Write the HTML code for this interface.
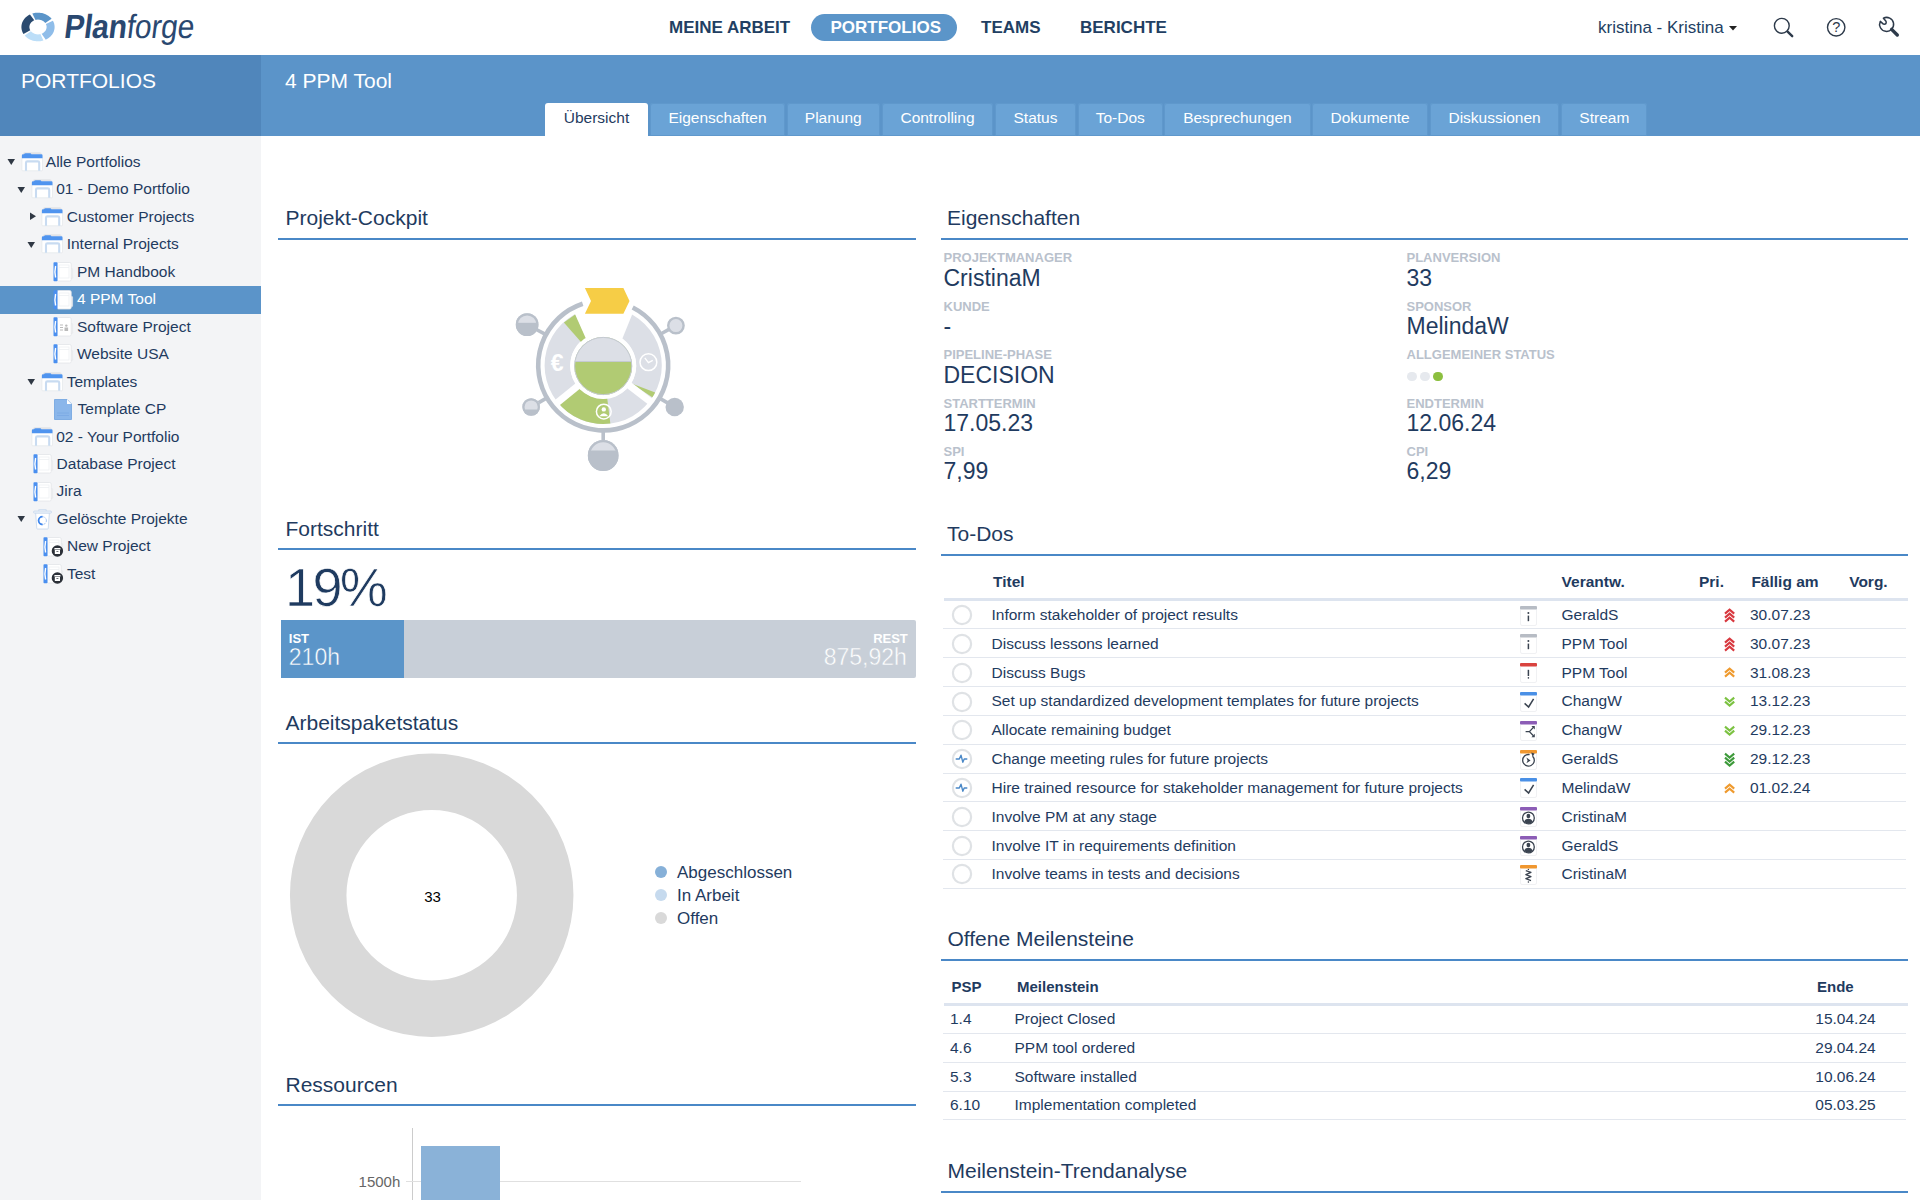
<!DOCTYPE html>
<html><head><meta charset="utf-8">
<style>
*{box-sizing:border-box;margin:0;padding:0}
html,body{width:1920px;height:1200px;overflow:hidden;background:#fff;font-family:"Liberation Sans",sans-serif;color:#1f3b60}
.a{position:absolute}
.t{position:absolute;white-space:nowrap;line-height:1}
#top{position:absolute;left:0;top:0;width:1920px;height:55px;background:#fff}
.nav{position:absolute;top:18.5px;font-weight:bold;font-size:17px;line-height:1;color:#223f63}
#side{position:absolute;left:0;top:55px;width:261px;height:1145px;background:#f3f4f6}
#sidehead{position:absolute;left:0;top:55px;width:261px;height:81px;background:#5086bb}
#mainhead{position:absolute;left:261px;top:55px;width:1659px;height:81px;background:#5b94c9}
.tab{position:absolute;top:103px;height:33px;background:#6aa3d6;border-radius:3px 3px 0 0;color:#fff;font-size:15.5px;line-height:1;box-shadow:inset 0 0 0 1px #5f98cc}
.tab span{position:absolute;top:7px;left:0;right:0;text-align:center}
.tab.on{background:#fff;color:#1f3b60;box-shadow:none}
.h2{position:absolute;font-size:21px;line-height:1;white-space:nowrap;color:#1f3b60}
.hl{position:absolute;height:2px;background:#4a88c7}
.row{position:absolute;left:0;width:261px;height:27.5px}
.tree{position:absolute;font-size:15.5px;line-height:1;white-space:nowrap;color:#1f3b60}
.lbl{position:absolute;font-size:13px;font-weight:bold;line-height:1;color:#b9c1cc;white-space:nowrap}
.val{position:absolute;font-size:23px;line-height:1;color:#1f3b60;white-space:nowrap}
.th{position:absolute;font-size:15.5px;font-weight:bold;line-height:1;color:#1f3b60;white-space:nowrap}
.td{position:absolute;font-size:15.5px;line-height:1;color:#1f3b60;white-space:nowrap}
.sep{position:absolute;height:1px;background:#e6e9ef}
</style></head><body>

<!-- TOP BAR -->
<div id="top"></div>
<div id="side"></div>
<div id="sidehead"></div>
<div id="mainhead"></div>
<svg class="a" style="left:18px;top:9px" width="40" height="36" viewBox="0 0 40 36"><path d="M5.48,24.93 L4.89,23.93 L4.40,22.89 L4.00,21.82 L3.70,20.73 L3.51,19.62 L3.41,18.50 L3.42,17.38 L3.52,16.26 L3.73,15.15 L4.04,14.06 L4.45,12.99 L4.96,11.96 L5.55,10.96 L6.24,10.00 L7.01,9.10 L7.86,8.25 L8.79,7.46 L9.78,6.73 L10.84,6.08 L11.95,5.49 L16.23,11.35 L15.64,11.62 L15.07,11.94 L14.53,12.29 L14.03,12.68 L13.56,13.10 L13.13,13.55 L12.75,14.02 L12.41,14.53 L12.11,15.05 L11.87,15.59 L11.67,16.15 L11.53,16.72 L11.44,17.29 L11.40,17.87 L11.42,18.45 L11.48,19.03 L11.60,19.60 L11.78,20.16 L12.00,20.71 L12.27,21.24Z" fill="#2a4a6f"/><path d="M14.32,4.56 L15.35,4.27 L16.41,4.04 L17.47,3.87 L18.55,3.75 L19.64,3.70 L20.72,3.71 L21.81,3.78 L22.88,3.92 L23.95,4.11 L24.99,4.36 L26.02,4.67 L27.02,5.04 L27.98,5.46 L28.92,5.94 L29.82,6.47 L30.67,7.05 L31.48,7.67 L32.24,8.34 L32.95,9.05 L33.60,9.80 L27.29,14.08 L26.98,13.68 L26.64,13.29 L26.26,12.93 L25.87,12.59 L25.44,12.27 L24.99,11.98 L24.53,11.71 L24.04,11.47 L23.53,11.25 L23.01,11.07 L22.48,10.91 L21.93,10.79 L21.38,10.70 L20.82,10.63 L20.26,10.60 L19.70,10.60 L19.14,10.64 L18.58,10.70 L18.03,10.80 L17.49,10.92Z" fill="#5b95c9"/><path d="M34.92,11.73 L35.43,12.74 L35.86,13.77 L36.19,14.83 L36.42,15.91 L36.56,17.00 L36.60,18.10 L36.54,19.20 L36.39,20.29 L36.13,21.36 L35.79,22.42 L35.35,23.45 L34.82,24.45 L34.20,25.41 L33.50,26.32 L32.72,27.19 L31.86,28.01 L30.93,28.76 L29.94,29.45 L28.89,30.07 L27.79,30.63 L23.63,24.71 L24.22,24.45 L24.78,24.15 L25.32,23.82 L25.82,23.45 L26.29,23.05 L26.72,22.62 L27.11,22.16 L27.46,21.68 L27.77,21.17 L28.03,20.65 L28.24,20.11 L28.41,19.56 L28.52,19.00 L28.58,18.44 L28.60,17.87 L28.56,17.30 L28.47,16.74 L28.34,16.18 L28.15,15.64 L27.92,15.11Z" fill="#8fbde9"/><path d="M25.40,31.52 L24.41,31.79 L23.39,32.00 L22.37,32.15 L21.33,32.25 L20.29,32.30 L19.25,32.29 L18.21,32.22 L17.17,32.09 L16.15,31.91 L15.15,31.68 L14.16,31.39 L13.20,31.04 L12.26,30.65 L11.35,30.21 L10.48,29.71 L9.64,29.18 L8.85,28.59 L8.10,27.97 L7.40,27.31 L6.74,26.61 L12.87,22.14 L13.19,22.52 L13.53,22.87 L13.90,23.21 L14.29,23.53 L14.71,23.83 L15.14,24.11 L15.60,24.36 L16.07,24.58 L16.56,24.78 L17.06,24.95 L17.57,25.10 L18.09,25.22 L18.63,25.30 L19.16,25.36 L19.70,25.40 L20.24,25.40 L20.78,25.37 L21.32,25.31 L21.85,25.23 L22.37,25.11Z" fill="#bcdef8"/></svg>
<div class="t" style="left:63px;top:13.1px;font-size:30px;color:#2a4870;letter-spacing:-0.2px;transform:scaleY(1.12) skewX(-8deg);transform-origin:0 25.9px"><b>Plan</b>forge</div>
<div class="t" style="top:18.55px;font-size:17px;left:669.00px;color:#223f63;font-weight:bold;">MEINE ARBEIT</div>
<div class="a" style="left:811.00px;top:14.00px;width:146.00px;height:26.50px;background:#5b95c9;border-radius:14px"></div>
<div class="t" style="top:18.55px;font-size:17px;left:830.50px;color:#fff;font-weight:bold;">PORTFOLIOS</div>
<div class="t" style="top:18.55px;font-size:17px;left:981.00px;color:#223f63;font-weight:bold;">TEAMS</div>
<div class="t" style="top:18.55px;font-size:17px;left:1080.00px;color:#223f63;font-weight:bold;">BERICHTE</div>
<div class="t" style="top:18.95px;font-size:17px;left:1598.00px;color:#223f63;">kristina - Kristina</div>
<svg class="a" style="left:1728px;top:24px" width="10" height="8"><path d="M1,2 L9,2 L5,6.5Z" fill="#222"/></svg>
<svg class="a" style="left:1770px;top:14px" width="28" height="28" viewBox="0 0 28 28">
<circle cx="11.8" cy="11.8" r="7.4" fill="none" stroke="#2d3a4a" stroke-width="1.4"/>
<path d="M17.6,17.6 L22.2,22.2" stroke="#2d3a4a" stroke-width="2.4" stroke-linecap="round"/></svg>
<svg class="a" style="left:1822px;top:13px" width="28" height="28" viewBox="0 0 28 28">
<circle cx="14.2" cy="14.3" r="8.7" fill="none" stroke="#2d3a4a" stroke-width="1.4"/>
<text x="14.2" y="19.2" text-anchor="middle" font-family="Liberation Sans" font-size="14.5" fill="#2d3a4a">?</text></svg>
<svg class="a" style="left:1875px;top:13px" width="28" height="28" viewBox="0 0 28 28">
<path d="M5.3,8.4 A7,7 0 1 0 8.4,5.2 L11,8.2 Q12,11.6 8.4,11.1 Z" fill="none" stroke="#2d3a4a" stroke-width="1.5" stroke-linejoin="round"/>
<path d="M16.6,16.4 L22.3,22" stroke="#2d3a4a" stroke-width="3.4" stroke-linecap="round"/></svg>
<div class="t" style="top:70.15px;font-size:21px;left:21.00px;color:#fff;">PORTFOLIOS</div>
<div class="t" style="top:70.15px;font-size:21px;left:285.00px;color:#fff;">4 PPM Tool</div>
<div class="tab on" style="left:545px;width:103.0px"><span>Übersicht</span></div>
<div class="tab" style="left:650px;width:135.0px"><span>Eigenschaften</span></div>
<div class="tab" style="left:786.5px;width:93.5px"><span>Planung</span></div>
<div class="tab" style="left:882px;width:111.0px"><span>Controlling</span></div>
<div class="tab" style="left:995px;width:81.0px"><span>Status</span></div>
<div class="tab" style="left:1078px;width:84.5px"><span>To-Dos</span></div>
<div class="tab" style="left:1164.3px;width:146.3px"><span>Besprechungen</span></div>
<div class="tab" style="left:1312.4px;width:115.4px"><span>Dokumente</span></div>
<div class="tab" style="left:1429.6px;width:129.9px"><span>Diskussionen</span></div>
<div class="tab" style="left:1561.3px;width:86.1px"><span>Stream</span></div>
<div class="a" style="left:0.00px;top:286.00px;width:261.00px;height:27.50px;background:#5b94c9;"></div>
<svg class="a" style="left:6.5px;top:158.2px" width="9" height="8"><path d="M0.5,1 L8,1 L4.25,7 Z" fill="#2f3844"/></svg>
<svg class="a" style="left:20.5px;top:152.0px" width="22" height="21" viewBox="0 0 22 21">
<path d="M1.8,2.6 Q1.8,0.3 3.8,0.3 L18.6,0.3 Q20.6,0.3 20.6,2.6 Z" fill="#e2e4e7"/>
<rect x="0.9" y="2.3" width="20.6" height="16.5" rx="1" fill="#fff" stroke="#e4e7ea" stroke-width="0.7"/>
<path d="M0.9,6.3 L0.9,3.4 Q0.9,2.3 2,2.3 L3,2.3 Q3.4,1.2 4.6,1.2 L9.2,1.2 Q10,1.2 10.4,2.3 L20.4,2.3 Q21.5,2.3 21.5,3.4 L21.5,6.3 Z" fill="#4f94ef"/>
<path d="M5,18.8 L5,10.8 Q5,9.4 6.4,9.4 L16.8,9.4 Q18.2,9.4 18.2,10.8 L18.2,18.8" fill="none" stroke="#c8dbf1" stroke-width="2.1"/>
</svg>
<div class="t" style="top:153.82px;font-size:15.5px;left:45.80px;color:#1f3b60;">Alle Portfolios</div>
<svg class="a" style="left:16.95px;top:185.67px" width="9" height="8"><path d="M0.5,1 L8,1 L4.25,7 Z" fill="#2f3844"/></svg>
<svg class="a" style="left:30.95px;top:179.47px" width="22" height="21" viewBox="0 0 22 21">
<path d="M1.8,2.6 Q1.8,0.3 3.8,0.3 L18.6,0.3 Q20.6,0.3 20.6,2.6 Z" fill="#e2e4e7"/>
<rect x="0.9" y="2.3" width="20.6" height="16.5" rx="1" fill="#fff" stroke="#e4e7ea" stroke-width="0.7"/>
<path d="M0.9,6.3 L0.9,3.4 Q0.9,2.3 2,2.3 L3,2.3 Q3.4,1.2 4.6,1.2 L9.2,1.2 Q10,1.2 10.4,2.3 L20.4,2.3 Q21.5,2.3 21.5,3.4 L21.5,6.3 Z" fill="#4f94ef"/>
<path d="M5,18.8 L5,10.8 Q5,9.4 6.4,9.4 L16.8,9.4 Q18.2,9.4 18.2,10.8 L18.2,18.8" fill="none" stroke="#c8dbf1" stroke-width="2.1"/>
</svg>
<div class="t" style="top:181.29px;font-size:15.5px;left:56.25px;color:#1f3b60;">01 - Demo Portfolio</div>
<svg class="a" style="left:28.5px;top:212.44px" width="8" height="9"><path d="M1,0.5 L7,4.25 L1,8 Z" fill="#2f3844"/></svg>
<svg class="a" style="left:41.4px;top:206.94px" width="22" height="21" viewBox="0 0 22 21">
<path d="M1.8,2.6 Q1.8,0.3 3.8,0.3 L18.6,0.3 Q20.6,0.3 20.6,2.6 Z" fill="#e2e4e7"/>
<rect x="0.9" y="2.3" width="20.6" height="16.5" rx="1" fill="#fff" stroke="#e4e7ea" stroke-width="0.7"/>
<path d="M0.9,6.3 L0.9,3.4 Q0.9,2.3 2,2.3 L3,2.3 Q3.4,1.2 4.6,1.2 L9.2,1.2 Q10,1.2 10.4,2.3 L20.4,2.3 Q21.5,2.3 21.5,3.4 L21.5,6.3 Z" fill="#4f94ef"/>
<path d="M5,18.8 L5,10.8 Q5,9.4 6.4,9.4 L16.8,9.4 Q18.2,9.4 18.2,10.8 L18.2,18.8" fill="none" stroke="#c8dbf1" stroke-width="2.1"/>
</svg>
<div class="t" style="top:208.76px;font-size:15.5px;left:66.70px;color:#1f3b60;">Customer Projects</div>
<svg class="a" style="left:27.4px;top:240.60999999999999px" width="9" height="8"><path d="M0.5,1 L8,1 L4.25,7 Z" fill="#2f3844"/></svg>
<svg class="a" style="left:41.4px;top:234.41px" width="22" height="21" viewBox="0 0 22 21">
<path d="M1.8,2.6 Q1.8,0.3 3.8,0.3 L18.6,0.3 Q20.6,0.3 20.6,2.6 Z" fill="#e2e4e7"/>
<rect x="0.9" y="2.3" width="20.6" height="16.5" rx="1" fill="#fff" stroke="#e4e7ea" stroke-width="0.7"/>
<path d="M0.9,6.3 L0.9,3.4 Q0.9,2.3 2,2.3 L3,2.3 Q3.4,1.2 4.6,1.2 L9.2,1.2 Q10,1.2 10.4,2.3 L20.4,2.3 Q21.5,2.3 21.5,3.4 L21.5,6.3 Z" fill="#4f94ef"/>
<path d="M5,18.8 L5,10.8 Q5,9.4 6.4,9.4 L16.8,9.4 Q18.2,9.4 18.2,10.8 L18.2,18.8" fill="none" stroke="#c8dbf1" stroke-width="2.1"/>
</svg>
<div class="t" style="top:236.23px;font-size:15.5px;left:66.70px;color:#1f3b60;">Internal Projects</div>
<svg class="a" style="left:53.0px;top:262.08px" width="21" height="22" viewBox="0 0 21 22">
<rect x="17.6" y="6.5" width="2" height="10" rx="0.6" fill="#f4f4f4" stroke="#e2e4e8" stroke-width="0.6"/>
<rect x="4" y="0.5" width="14.2" height="18.5" rx="1.5" fill="#fff" stroke="#e2e5e9" stroke-width="0.8"/>
<rect x="0.5" y="0.3" width="4" height="19" rx="0.8" fill="#4a8ff0"/>
<path d="M2.6,4 Q1.3,9.6 2.6,15.5" stroke="#fff" stroke-width="1.4" fill="none"/>
<rect x="6" y="3" width="10" height="13" fill="none" stroke="#eef0f2" stroke-width="0.8"/><path d="M6,5.5 L16,5.5" stroke="#eef0f2" stroke-width="0.8"/></svg>
<div class="t" style="top:263.70px;font-size:15.5px;left:77.00px;color:#1f3b60;">PM Handbook</div>
<svg class="a" style="left:53.0px;top:289.55px" width="21" height="22" viewBox="0 0 21 22">
<rect x="17.6" y="6.5" width="2" height="10" rx="0.6" fill="#f4f4f4" stroke="#e2e4e8" stroke-width="0.6"/>
<rect x="4" y="0.5" width="14.2" height="18.5" rx="1.5" fill="#fff" stroke="#e2e5e9" stroke-width="0.8"/>
<rect x="0.5" y="0.3" width="4" height="19" rx="0.8" fill="#4a8ff0"/>
<path d="M2.6,4 Q1.3,9.6 2.6,15.5" stroke="#fff" stroke-width="1.4" fill="none"/>
<rect x="6" y="3" width="10" height="13" fill="none" stroke="#eef0f2" stroke-width="0.8"/><path d="M6,5.5 L16,5.5" stroke="#eef0f2" stroke-width="0.8"/></svg>
<div class="t" style="top:291.18px;font-size:15.5px;left:77.00px;color:#fff;">4 PPM Tool</div>
<svg class="a" style="left:53.0px;top:317.02px" width="21" height="22" viewBox="0 0 21 22">
<rect x="17.6" y="6.5" width="2" height="10" rx="0.6" fill="#f4f4f4" stroke="#e2e4e8" stroke-width="0.6"/>
<rect x="4" y="0.5" width="14.2" height="18.5" rx="1.5" fill="#fff" stroke="#e2e5e9" stroke-width="0.8"/>
<rect x="0.5" y="0.3" width="4" height="19" rx="0.8" fill="#4a8ff0"/>
<path d="M2.6,4 Q1.3,9.6 2.6,15.5" stroke="#fff" stroke-width="1.4" fill="none"/>
<path d="M7,8 L10,8 M7,10.5 L10,10.5 M7,13 L10,13" stroke="#bbb" stroke-width="1"/><circle cx="13.3" cy="8.6" r="1.2" fill="#bbb"/><rect x="11.5" y="10.5" width="3.6" height="3.5" fill="#bbb"/></svg>
<div class="t" style="top:318.64px;font-size:15.5px;left:77.00px;color:#1f3b60;">Software Project</div>
<svg class="a" style="left:53.0px;top:344.48999999999995px" width="21" height="22" viewBox="0 0 21 22">
<rect x="17.6" y="6.5" width="2" height="10" rx="0.6" fill="#f4f4f4" stroke="#e2e4e8" stroke-width="0.6"/>
<rect x="4" y="0.5" width="14.2" height="18.5" rx="1.5" fill="#fff" stroke="#e2e5e9" stroke-width="0.8"/>
<rect x="0.5" y="0.3" width="4" height="19" rx="0.8" fill="#4a8ff0"/>
<path d="M2.6,4 Q1.3,9.6 2.6,15.5" stroke="#fff" stroke-width="1.4" fill="none"/>
<rect x="6" y="3" width="10" height="13" fill="none" stroke="#eef0f2" stroke-width="0.8"/><path d="M6,5.5 L16,5.5" stroke="#eef0f2" stroke-width="0.8"/></svg>
<div class="t" style="top:346.11px;font-size:15.5px;left:77.00px;color:#1f3b60;">Website USA</div>
<svg class="a" style="left:27.4px;top:377.96px" width="9" height="8"><path d="M0.5,1 L8,1 L4.25,7 Z" fill="#2f3844"/></svg>
<svg class="a" style="left:41.4px;top:371.76px" width="22" height="21" viewBox="0 0 22 21">
<path d="M1.8,2.6 Q1.8,0.3 3.8,0.3 L18.6,0.3 Q20.6,0.3 20.6,2.6 Z" fill="#e2e4e7"/>
<rect x="0.9" y="2.3" width="20.6" height="16.5" rx="1" fill="#fff" stroke="#e4e7ea" stroke-width="0.7"/>
<path d="M0.9,6.3 L0.9,3.4 Q0.9,2.3 2,2.3 L3,2.3 Q3.4,1.2 4.6,1.2 L9.2,1.2 Q10,1.2 10.4,2.3 L20.4,2.3 Q21.5,2.3 21.5,3.4 L21.5,6.3 Z" fill="#4f94ef"/>
<path d="M5,18.8 L5,10.8 Q5,9.4 6.4,9.4 L16.8,9.4 Q18.2,9.4 18.2,10.8 L18.2,18.8" fill="none" stroke="#c8dbf1" stroke-width="2.1"/>
</svg>
<div class="t" style="top:373.58px;font-size:15.5px;left:66.70px;color:#1f3b60;">Templates</div>
<svg class="a" style="left:53.5px;top:398.9px" width="18" height="21" viewBox="0 0 18 21">
<path d="M0.5,0.5 L13,0.5 L17.5,5 L17.5,20.5 L0.5,20.5 Z" fill="#8ab6ea" stroke="#6fa2e0" stroke-width="0.8"/>
<path d="M13,0.5 L13,5 L17.5,5 Z" fill="#fff"/>
<path d="M3,14 L15,14 M3,16.5 L15,16.5" stroke="#7aa8e3" stroke-width="0.8"/></svg>
<div class="t" style="top:401.06px;font-size:15.5px;left:77.60px;color:#1f3b60;">Template CP</div>
<svg class="a" style="left:30.95px;top:426.7px" width="22" height="21" viewBox="0 0 22 21">
<path d="M1.8,2.6 Q1.8,0.3 3.8,0.3 L18.6,0.3 Q20.6,0.3 20.6,2.6 Z" fill="#e2e4e7"/>
<rect x="0.9" y="2.3" width="20.6" height="16.5" rx="1" fill="#fff" stroke="#e4e7ea" stroke-width="0.7"/>
<path d="M0.9,6.3 L0.9,3.4 Q0.9,2.3 2,2.3 L3,2.3 Q3.4,1.2 4.6,1.2 L9.2,1.2 Q10,1.2 10.4,2.3 L20.4,2.3 Q21.5,2.3 21.5,3.4 L21.5,6.3 Z" fill="#4f94ef"/>
<path d="M5,18.8 L5,10.8 Q5,9.4 6.4,9.4 L16.8,9.4 Q18.2,9.4 18.2,10.8 L18.2,18.8" fill="none" stroke="#c8dbf1" stroke-width="2.1"/>
</svg>
<div class="t" style="top:428.52px;font-size:15.5px;left:56.25px;color:#1f3b60;">02 - Your Portfolio</div>
<svg class="a" style="left:32.5px;top:454.36999999999995px" width="21" height="22" viewBox="0 0 21 22">
<rect x="17.6" y="6.5" width="2" height="10" rx="0.6" fill="#f4f4f4" stroke="#e2e4e8" stroke-width="0.6"/>
<rect x="4" y="0.5" width="14.2" height="18.5" rx="1.5" fill="#fff" stroke="#e2e5e9" stroke-width="0.8"/>
<rect x="0.5" y="0.3" width="4" height="19" rx="0.8" fill="#4a8ff0"/>
<path d="M2.6,4 Q1.3,9.6 2.6,15.5" stroke="#fff" stroke-width="1.4" fill="none"/>
<rect x="6" y="3" width="10" height="13" fill="none" stroke="#eef0f2" stroke-width="0.8"/><path d="M6,5.5 L16,5.5" stroke="#eef0f2" stroke-width="0.8"/></svg>
<div class="t" style="top:455.99px;font-size:15.5px;left:56.60px;color:#1f3b60;">Database Project</div>
<svg class="a" style="left:32.5px;top:481.84px" width="21" height="22" viewBox="0 0 21 22">
<rect x="17.6" y="6.5" width="2" height="10" rx="0.6" fill="#f4f4f4" stroke="#e2e4e8" stroke-width="0.6"/>
<rect x="4" y="0.5" width="14.2" height="18.5" rx="1.5" fill="#fff" stroke="#e2e5e9" stroke-width="0.8"/>
<rect x="0.5" y="0.3" width="4" height="19" rx="0.8" fill="#4a8ff0"/>
<path d="M2.6,4 Q1.3,9.6 2.6,15.5" stroke="#fff" stroke-width="1.4" fill="none"/>
<rect x="6" y="3" width="10" height="13" fill="none" stroke="#eef0f2" stroke-width="0.8"/><path d="M6,5.5 L16,5.5" stroke="#eef0f2" stroke-width="0.8"/></svg>
<div class="t" style="top:483.46px;font-size:15.5px;left:56.60px;color:#1f3b60;">Jira</div>
<svg class="a" style="left:16.95px;top:515.3100000000001px" width="9" height="8"><path d="M0.5,1 L8,1 L4.25,7 Z" fill="#2f3844"/></svg>
<svg class="a" style="left:32.5px;top:508.8px" width="19" height="21" viewBox="0 0 19 21">
<path d="M5.8,2.2 L5.8,0.8 Q5.8,0.3 6.4,0.3 L12.6,0.3 Q13.2,0.3 13.2,0.8 L13.2,2.2" fill="#eef3f9" stroke="#c4d6ec" stroke-width="0.8"/>
<path d="M2.6,3.8 L16.4,3.8 L15.2,19.6 Q15.1,20 14.6,20 L4.4,20 Q3.9,20 3.8,19.6 Z" fill="#fff" stroke="#c4d6ec" stroke-width="0.8"/>
<rect x="0.5" y="2" width="18" height="2.2" rx="1" fill="#e9f0f8" stroke="#c4d6ec" stroke-width="0.7"/>
<circle cx="9.5" cy="11.6" r="3.9" fill="none" stroke="#8db6ee" stroke-width="0.9" stroke-dasharray="1.6 0.9"/>
<path d="M9.5,7.7 A3.9,3.9 0 0 0 9.5,15.5" fill="none" stroke="#3f86ec" stroke-width="1.8"/>
</svg>
<div class="t" style="top:510.94px;font-size:15.5px;left:56.60px;color:#1f3b60;">Gelöschte Projekte</div>
<svg class="a" style="left:42.5px;top:536.78px" width="21" height="22" viewBox="0 0 21 22">
<rect x="17.6" y="6.5" width="2" height="10" rx="0.6" fill="#f4f4f4" stroke="#e2e4e8" stroke-width="0.6"/>
<rect x="4" y="0.5" width="14.2" height="18.5" rx="1.5" fill="#fff" stroke="#e2e5e9" stroke-width="0.8"/>
<rect x="0.5" y="0.3" width="4" height="19" rx="0.8" fill="#4a8ff0"/>
<path d="M2.6,4 Q1.3,9.6 2.6,15.5" stroke="#fff" stroke-width="1.4" fill="none"/>
<rect x="6" y="3" width="10" height="13" fill="none" stroke="#eef0f2" stroke-width="0.8"/><path d="M6,5.5 L16,5.5" stroke="#eef0f2" stroke-width="0.8"/><circle cx="14.4" cy="14" r="5.7" fill="#2b3038"/><rect x="11.3" y="11" width="6.2" height="1.6" rx="0.4" fill="#fff"/><rect x="11.8" y="13" width="5.2" height="4" fill="#fff"/><rect x="13.4" y="14" width="2" height="0.7" fill="#2b3038"/></svg>
<div class="t" style="top:538.40px;font-size:15.5px;left:67.00px;color:#1f3b60;">New Project</div>
<svg class="a" style="left:42.5px;top:564.25px" width="21" height="22" viewBox="0 0 21 22">
<rect x="17.6" y="6.5" width="2" height="10" rx="0.6" fill="#f4f4f4" stroke="#e2e4e8" stroke-width="0.6"/>
<rect x="4" y="0.5" width="14.2" height="18.5" rx="1.5" fill="#fff" stroke="#e2e5e9" stroke-width="0.8"/>
<rect x="0.5" y="0.3" width="4" height="19" rx="0.8" fill="#4a8ff0"/>
<path d="M2.6,4 Q1.3,9.6 2.6,15.5" stroke="#fff" stroke-width="1.4" fill="none"/>
<rect x="6" y="3" width="10" height="13" fill="none" stroke="#eef0f2" stroke-width="0.8"/><path d="M6,5.5 L16,5.5" stroke="#eef0f2" stroke-width="0.8"/><circle cx="14.4" cy="14" r="5.7" fill="#2b3038"/><rect x="11.3" y="11" width="6.2" height="1.6" rx="0.4" fill="#fff"/><rect x="11.8" y="13" width="5.2" height="4" fill="#fff"/><rect x="13.4" y="14" width="2" height="0.7" fill="#2b3038"/></svg>
<div class="t" style="top:565.88px;font-size:15.5px;left:67.00px;color:#1f3b60;">Test</div>
<div class="t" style="top:207.35px;font-size:21px;left:285.50px;color:#1f3b60;">Projekt-Cockpit</div>
<div class="a" style="left:278.00px;top:238.00px;width:637.60px;height:2.00px;background:#4a88c7;"></div>
<div class="t" style="top:517.55px;font-size:21px;left:285.50px;color:#1f3b60;">Fortschritt</div>
<div class="a" style="left:278.00px;top:547.50px;width:637.60px;height:2.00px;background:#4a88c7;"></div>
<div class="t" style="top:711.75px;font-size:21px;left:285.50px;color:#1f3b60;">Arbeitspaketstatus</div>
<div class="a" style="left:278.00px;top:742.00px;width:637.60px;height:2.00px;background:#4a88c7;"></div>
<div class="t" style="top:1073.85px;font-size:21px;left:285.50px;color:#1f3b60;">Ressourcen</div>
<div class="a" style="left:278.00px;top:1103.50px;width:637.60px;height:2.00px;background:#4a88c7;"></div>
<svg class="a" style="left:500px;top:270px" width="210" height="210" viewBox="500 270 210 210">
<path d="M603.21,306.80 A58.6,58.6 0 1 1 603.19,306.80 L603.19,332.40 A33.0,33.0 0 1 0 603.21,332.40 Z" fill="#dcdfe6"/>
<path d="M610.34,423.56 A58.6,58.6 0 0 1 557.02,401.48 L577.20,385.72 A33.0,33.0 0 0 0 607.22,398.15 Z" fill="#b1cb73"/>
<path d="M563.9,322.5 L575.5,314.2 L586.5,338.6 L581.2,342.2 Z" fill="#b1cb73"/>
<path d="M655.18,392.46 A58.6,58.6 0 0 1 652.35,397.32 L630.88,383.37 Z" fill="#b1cb73"/>
<path d="M585.75,338.25 L571,305 L636,305 L622.5,338.25 L603,362 Z" fill="#fff"/>
<path d="M603.2,365.4 L653.97,404.36" stroke="#fff" stroke-width="7"/>
<path d="M603.2,365.4 L553.46,405.68" stroke="#fff" stroke-width="7"/>
<circle cx="603.2" cy="366" r="33.0" fill="#fff"/>
<path d="M632.71,307.48 A65,65 0 1 1 582.68,303.72" fill="none" stroke="#b9c0ca" stroke-width="4.6"/>
<path d="M545.03,334.21 L536.31,329.53" stroke="#b9c0ca" stroke-width="3.6"/><clipPath id="c298"><circle cx="527.14" cy="324.62" r="11.4"/></clipPath><g clip-path="url(#c298)"><rect x="515.74" y="313.22" width="22.8" height="22.8" fill="#b9c0ca"/><rect x="515.74" y="313.22" width="22.8" height="9.58" fill="#dcdfe6"/></g><circle cx="527.14" cy="324.62" r="10.3" fill="none" stroke="#b9c0ca" stroke-width="2.2"/>
<path d="M661.09,333.71 L668.99,329.38" stroke="#b9c0ca" stroke-width="3.6"/><circle cx="675.92" cy="325.59" r="7.7" fill="#dcdfe6" stroke="#b9c0ca" stroke-width="2.4"/>
<path d="M546.04,398.40 L537.90,403.10" stroke="#b9c0ca" stroke-width="3.6"/><clipPath id="c240"><circle cx="531.15" cy="407.00" r="8.8"/></clipPath><g clip-path="url(#c240)"><rect x="522.35" y="398.20" width="17.6" height="17.6" fill="#b9c0ca"/><rect x="522.35" y="398.20" width="17.6" height="11.30" fill="#dcdfe6"/></g><circle cx="531.15" cy="407.00" r="7.700000000000001" fill="none" stroke="#b9c0ca" stroke-width="2.2"/>
<path d="M660.24,398.60 L667.59,402.87" stroke="#b9c0ca" stroke-width="3.6"/><circle cx="674.68" cy="407.00" r="9.2" fill="#b9c0ca"/>
<path d="M603.20,431.40 L603.20,441.10" stroke="#b9c0ca" stroke-width="3.6"/><clipPath id="c180"><circle cx="603.20" cy="455.50" r="15.4"/></clipPath><g clip-path="url(#c180)"><rect x="587.80" y="440.10" width="30.8" height="30.8" fill="#b9c0ca"/><rect x="587.80" y="440.10" width="30.8" height="10.40" fill="#dcdfe6"/></g><circle cx="603.20" cy="455.50" r="14.3" fill="none" stroke="#b9c0ca" stroke-width="2.2"/>
<clipPath id="disk"><circle cx="603.2" cy="366" r="28.9"/></clipPath>
<g clip-path="url(#disk)"><rect x="570" y="330" width="70" height="72" fill="#b1cb73"/><rect x="570" y="330" width="70" height="31.4" fill="#dcdfe6"/><rect x="570" y="361" width="70" height="1" fill="#c5cad2"/></g>
<circle cx="603.2" cy="366" r="28.6" fill="none" stroke="#c5cad2" stroke-width="1"/>
<path d="M584.9,288 L623.4,288 L629.5,301 L623.4,313.75 L584.9,313.75 L591,301 Z" fill="#f6cd46"/>
<text x="557.2" y="370.6" text-anchor="middle" font-family="Liberation Sans" font-weight="bold" font-size="23" fill="#fff">€</text>
<circle cx="648.4" cy="362.2" r="8.4" fill="none" stroke="#fff" stroke-width="1.5"/><path d="M644.8,357.8 L648.4,362.6 L652.8,360.4" fill="none" stroke="#fff" stroke-width="1.3"/>
<circle cx="603.8" cy="411.6" r="7.4" fill="none" stroke="#fff" stroke-width="1.5"/><circle cx="603.8" cy="409.4" r="2.2" fill="#fff"/><path d="M599.3,416.2 Q603.8,410.5 608.3,416.2 Z" fill="#fff"/>
</svg>
<div class="t" style="top:559.90px;font-size:54px;left:285.00px;color:#1f3b60;letter-spacing:-2.6px;-webkit-text-stroke:0.7px #fff;">19%</div>
<div class="a" style="left:281.00px;top:620.00px;width:634.60px;height:58.00px;background:#c8cfd8;border-radius:0 2px 2px 0"></div>
<div class="a" style="left:281.00px;top:620.00px;width:123.00px;height:58.00px;background:#5b95c9;"></div>
<div class="t" style="top:631.55px;font-size:13px;left:288.80px;color:#fff;font-weight:bold;">IST</div>
<div class="t" style="top:646.45px;font-size:23px;left:288.80px;color:#fff;-webkit-text-stroke:0.45px #5b95c9;">210h</div>
<div class="t" style="top:631.55px;font-size:13px;right:1012.20px;color:#fff;font-weight:bold;">REST</div>
<div class="t" style="top:646.45px;font-size:23px;right:1013.20px;color:#fff;-webkit-text-stroke:0.45px #c8cfd8;">875,92h</div>
<svg class="a" style="left:280px;top:743px" width="310" height="310"><circle cx="151.7" cy="152.2" r="113.5" fill="none" stroke="#d9d9d9" stroke-width="56.5"/></svg>
<div class="t" style="top:888.75px;font-size:15px;left:232.50px;width:400px;text-align:center;color:#000;">33</div>
<div class="a" style="left:654.50px;top:866.20px;width:12.00px;height:12.00px;background:#86b0d8;border-radius:50%"></div>
<div class="t" style="top:863.95px;font-size:17px;left:677.00px;color:#1f3b60;">Abgeschlossen</div>
<div class="a" style="left:654.50px;top:889.20px;width:12.00px;height:12.00px;background:#c6daee;border-radius:50%"></div>
<div class="t" style="top:886.95px;font-size:17px;left:677.00px;color:#1f3b60;">In Arbeit</div>
<div class="a" style="left:654.50px;top:912.20px;width:12.00px;height:12.00px;background:#d9d9d9;border-radius:50%"></div>
<div class="t" style="top:909.95px;font-size:17px;left:677.00px;color:#1f3b60;">Offen</div>
<div class="a" style="left:411.50px;top:1128.00px;width:1.00px;height:72.00px;background:#cccccc;"></div>
<div class="a" style="left:406.00px;top:1180.50px;width:395.00px;height:1.00px;background:#e0e0e0;"></div>
<div class="a" style="left:420.60px;top:1146.30px;width:79.40px;height:60.00px;background:#8ab2d8;"></div>
<div class="t" style="top:1173.55px;font-size:15px;right:1519.70px;color:#666;">1500h</div>
<div class="t" style="top:207.35px;font-size:21px;left:947.00px;color:#1f3b60;">Eigenschaften</div>
<div class="a" style="left:941.00px;top:238.00px;width:967.00px;height:2.00px;background:#4a88c7;"></div>
<div class="t" style="top:251.45px;font-size:13px;left:943.50px;color:#b9c1cc;font-weight:bold;">PROJEKTMANAGER</div>
<div class="t" style="top:266.75px;font-size:23px;left:943.50px;color:#1f3b60;">CristinaM</div>
<div class="t" style="top:251.45px;font-size:13px;left:1406.50px;color:#b9c1cc;font-weight:bold;">PLANVERSION</div>
<div class="t" style="top:266.75px;font-size:23px;left:1406.50px;color:#1f3b60;">33</div>
<div class="t" style="top:299.85px;font-size:13px;left:943.50px;color:#b9c1cc;font-weight:bold;">KUNDE</div>
<div class="t" style="top:315.15px;font-size:23px;left:943.50px;color:#1f3b60;">-</div>
<div class="t" style="top:299.85px;font-size:13px;left:1406.50px;color:#b9c1cc;font-weight:bold;">SPONSOR</div>
<div class="t" style="top:315.15px;font-size:23px;left:1406.50px;color:#1f3b60;">MelindaW</div>
<div class="t" style="top:348.25px;font-size:13px;left:943.50px;color:#b9c1cc;font-weight:bold;">PIPELINE-PHASE</div>
<div class="t" style="top:363.55px;font-size:23px;left:943.50px;color:#1f3b60;">DECISION</div>
<div class="t" style="top:348.25px;font-size:13px;left:1406.50px;color:#b9c1cc;font-weight:bold;">ALLGEMEINER STATUS</div>
<div class="t" style="top:396.65px;font-size:13px;left:943.50px;color:#b9c1cc;font-weight:bold;">STARTTERMIN</div>
<div class="t" style="top:411.95px;font-size:23px;left:943.50px;color:#1f3b60;">17.05.23</div>
<div class="t" style="top:396.65px;font-size:13px;left:1406.50px;color:#b9c1cc;font-weight:bold;">ENDTERMIN</div>
<div class="t" style="top:411.95px;font-size:23px;left:1406.50px;color:#1f3b60;">12.06.24</div>
<div class="t" style="top:445.05px;font-size:13px;left:943.50px;color:#b9c1cc;font-weight:bold;">SPI</div>
<div class="t" style="top:460.35px;font-size:23px;left:943.50px;color:#1f3b60;">7,99</div>
<div class="t" style="top:445.05px;font-size:13px;left:1406.50px;color:#b9c1cc;font-weight:bold;">CPI</div>
<div class="t" style="top:460.35px;font-size:23px;left:1406.50px;color:#1f3b60;">6,29</div>
<div class="a" style="left:1407.00px;top:371.80px;width:9.60px;height:9.60px;background:#e6e9ee;border-radius:50%"></div>
<div class="a" style="left:1420.10px;top:371.80px;width:9.60px;height:9.60px;background:#e6e9ee;border-radius:50%"></div>
<div class="a" style="left:1433.20px;top:371.80px;width:9.60px;height:9.60px;background:#8cbf3f;border-radius:50%"></div>
<div class="t" style="top:523.45px;font-size:21px;left:947.00px;color:#1f3b60;">To-Dos</div>
<div class="a" style="left:941.00px;top:554.00px;width:967.00px;height:2.00px;background:#4a88c7;"></div>
<div class="t" style="top:573.83px;font-size:15.5px;left:993.00px;font-weight:bold;">Titel</div>
<div class="t" style="top:573.83px;font-size:15.5px;left:1561.60px;font-weight:bold;">Verantw.</div>
<div class="t" style="top:573.83px;font-size:15.5px;left:1699.00px;font-weight:bold;">Pri.</div>
<div class="t" style="top:573.83px;font-size:15.5px;left:1751.40px;font-weight:bold;">Fällig am</div>
<div class="t" style="top:573.83px;font-size:15.5px;left:1849.20px;font-weight:bold;">Vorg.</div>
<div class="a" style="left:944.00px;top:598.00px;width:964.00px;height:3.00px;background:#dde4ef;"></div>
<svg class="a" style="left:951px;top:604.20px" width="22" height="22"><circle cx="11" cy="11" r="9.1" fill="none" stroke="#dfe2e5" stroke-width="2.2"/></svg>
<div class="t" style="top:607.03px;font-size:15.5px;left:991.50px;">Inform stakeholder of project results</div>
<svg class="a" style="left:1519.5px;top:605.50px" width="17" height="20"><rect x="0.5" y="0.5" width="16" height="19" rx="1.5" fill="#fff" stroke="#eceef0" stroke-width="0.8"/><rect x="0" y="0" width="17" height="3.6" rx="1" fill="#b7bcc4"/><circle cx="8.4" cy="7.1" r="1" fill="#3a4350"/><path d="M8.4,9.6 L8.4,15.2" stroke="#3a4350" stroke-width="1.5"/></svg>
<div class="t" style="top:607.03px;font-size:15.5px;left:1561.50px;">GeraldS</div>
<svg class="a" style="left:1724.4px;top:607.80px" width="12" height="16"><path d="M1,5.6 L5.6,1.6 L10.2,5.6 M1,9.6 L5.6,5.6 L10.2,9.6 M1,13.6 L5.6,9.6 L10.2,13.6" fill="none" stroke="#d8383f" stroke-width="2.1"/></svg>
<div class="t" style="top:607.03px;font-size:15.5px;left:1750.00px;">30.07.23</div>
<div class="a" style="left:943.00px;top:628.00px;width:962.50px;height:1.00px;background:#e3e7ee;"></div>
<svg class="a" style="left:951px;top:633.01px" width="22" height="22"><circle cx="11" cy="11" r="9.1" fill="none" stroke="#dfe2e5" stroke-width="2.2"/></svg>
<div class="t" style="top:635.84px;font-size:15.5px;left:991.50px;">Discuss lessons learned</div>
<svg class="a" style="left:1519.5px;top:634.31px" width="17" height="20"><rect x="0.5" y="0.5" width="16" height="19" rx="1.5" fill="#fff" stroke="#eceef0" stroke-width="0.8"/><rect x="0" y="0" width="17" height="3.6" rx="1" fill="#b7bcc4"/><circle cx="8.4" cy="7.1" r="1" fill="#3a4350"/><path d="M8.4,9.6 L8.4,15.2" stroke="#3a4350" stroke-width="1.5"/></svg>
<div class="t" style="top:635.84px;font-size:15.5px;left:1561.50px;">PPM Tool</div>
<svg class="a" style="left:1724.4px;top:636.61px" width="12" height="16"><path d="M1,5.6 L5.6,1.6 L10.2,5.6 M1,9.6 L5.6,5.6 L10.2,9.6 M1,13.6 L5.6,9.6 L10.2,13.6" fill="none" stroke="#d8383f" stroke-width="2.1"/></svg>
<div class="t" style="top:635.84px;font-size:15.5px;left:1750.00px;">30.07.23</div>
<div class="a" style="left:943.00px;top:657.00px;width:962.50px;height:1.00px;background:#e3e7ee;"></div>
<svg class="a" style="left:951px;top:661.82px" width="22" height="22"><circle cx="11" cy="11" r="9.1" fill="none" stroke="#dfe2e5" stroke-width="2.2"/></svg>
<div class="t" style="top:664.65px;font-size:15.5px;left:991.50px;">Discuss Bugs</div>
<svg class="a" style="left:1519.5px;top:663.12px" width="17" height="20"><rect x="0.5" y="0.5" width="16" height="19" rx="1.5" fill="#fff" stroke="#eceef0" stroke-width="0.8"/><rect x="0" y="0" width="17" height="3.6" rx="1" fill="#d9433f"/><path d="M8.4,6.8 L8.4,13" stroke="#3a4350" stroke-width="1.5"/><circle cx="8.4" cy="14.9" r="0.8" fill="#3a4350"/></svg>
<div class="t" style="top:664.65px;font-size:15.5px;left:1561.50px;">PPM Tool</div>
<svg class="a" style="left:1724.4px;top:665.42px" width="12" height="16"><path d="M1,7.6 L5.6,3.6 L10.2,7.6 M1,11.6 L5.6,7.6 L10.2,11.6" fill="none" stroke="#ef9a2e" stroke-width="2.1"/></svg>
<div class="t" style="top:664.65px;font-size:15.5px;left:1750.00px;">31.08.23</div>
<div class="a" style="left:943.00px;top:686.00px;width:962.50px;height:1.00px;background:#e3e7ee;"></div>
<svg class="a" style="left:951px;top:690.63px" width="22" height="22"><circle cx="11" cy="11" r="9.1" fill="none" stroke="#dfe2e5" stroke-width="2.2"/></svg>
<div class="t" style="top:693.46px;font-size:15.5px;left:991.50px;">Set up standardized development templates for future projects</div>
<svg class="a" style="left:1519.5px;top:691.93px" width="17" height="20"><rect x="0.5" y="0.5" width="16" height="19" rx="1.5" fill="#fff" stroke="#eceef0" stroke-width="0.8"/><rect x="0" y="0" width="17" height="3.6" rx="1" fill="#4a90e6"/><path d="M4.6,11.4 L8.6,15 L13.6,6.8" fill="none" stroke="#3a4350" stroke-width="1.5"/></svg>
<div class="t" style="top:693.46px;font-size:15.5px;left:1561.50px;">ChangW</div>
<svg class="a" style="left:1724.4px;top:694.23px" width="12" height="16"><path d="M1,3.6 L5.6,7.6 L10.2,3.6 M1,7.6 L5.6,11.6 L10.2,7.6" fill="none" stroke="#7cc242" stroke-width="2.1"/></svg>
<div class="t" style="top:693.46px;font-size:15.5px;left:1750.00px;">13.12.23</div>
<div class="a" style="left:943.00px;top:715.00px;width:962.50px;height:1.00px;background:#e3e7ee;"></div>
<svg class="a" style="left:951px;top:719.44px" width="22" height="22"><circle cx="11" cy="11" r="9.1" fill="none" stroke="#dfe2e5" stroke-width="2.2"/></svg>
<div class="t" style="top:722.27px;font-size:15.5px;left:991.50px;">Allocate remaining budget</div>
<svg class="a" style="left:1519.5px;top:720.74px" width="17" height="20"><rect x="0.5" y="0.5" width="16" height="19" rx="1.5" fill="#fff" stroke="#eceef0" stroke-width="0.8"/><rect x="0" y="0" width="17" height="3.6" rx="1" fill="#8c5db6"/><path d="M5.6,10.6 L9.4,10.6 L13.4,6.4 M9.4,10.6 L13.4,14.8" fill="none" stroke="#3a4350" stroke-width="1.3"/><path d="M11.4,5 L14.8,5 L14.8,8.4Z M11.4,16.2 L14.8,16.2 L14.8,12.8Z" fill="#3a4350"/></svg>
<div class="t" style="top:722.27px;font-size:15.5px;left:1561.50px;">ChangW</div>
<svg class="a" style="left:1724.4px;top:723.04px" width="12" height="16"><path d="M1,3.6 L5.6,7.6 L10.2,3.6 M1,7.6 L5.6,11.6 L10.2,7.6" fill="none" stroke="#7cc242" stroke-width="2.1"/></svg>
<div class="t" style="top:722.27px;font-size:15.5px;left:1750.00px;">29.12.23</div>
<div class="a" style="left:943.00px;top:744.00px;width:962.50px;height:1.00px;background:#e3e7ee;"></div>
<svg class="a" style="left:951px;top:748.25px" width="22" height="22"><circle cx="11" cy="11" r="9.1" fill="none" stroke="#dfe2e5" stroke-width="2.2"/><path d="M5.2,11 L8.3,11 L10,7.2 L11.8,14.2 L13.2,11 L15.8,11" fill="none" stroke="#4a88c7" stroke-width="1.4" stroke-linejoin="round" stroke-linecap="round"/></svg>
<div class="t" style="top:751.08px;font-size:15.5px;left:991.50px;">Change meeting rules for future projects</div>
<svg class="a" style="left:1519.5px;top:749.55px" width="17" height="20"><rect x="0.5" y="0.5" width="16" height="19" rx="1.5" fill="#fff" stroke="#eceef0" stroke-width="0.8"/><rect x="0" y="0" width="17" height="3.6" rx="1" fill="#f0972f"/><path d="M12.6,6.2 A5.8,5.8 0 1 1 9.6,4.6" fill="none" stroke="#3a4350" stroke-width="1.3"/><path d="M11.2,2.6 L14.6,3.6 L12.6,6.8Z" fill="#3a4350"/><path d="M6.4,7.6 L10.6,10.4 L6.4,13.2 L7.6,10.4Z" fill="#3a4350"/></svg>
<div class="t" style="top:751.08px;font-size:15.5px;left:1561.50px;">GeraldS</div>
<svg class="a" style="left:1724.4px;top:751.85px" width="12" height="16"><path d="M1,1.6 L5.6,5.6 L10.2,1.6 M1,5.6 L5.6,9.6 L10.2,5.6 M1,9.6 L5.6,13.6 L10.2,9.6" fill="none" stroke="#3d9a3a" stroke-width="2.1"/></svg>
<div class="t" style="top:751.08px;font-size:15.5px;left:1750.00px;">29.12.23</div>
<div class="a" style="left:943.00px;top:773.00px;width:962.50px;height:1.00px;background:#e3e7ee;"></div>
<svg class="a" style="left:951px;top:777.06px" width="22" height="22"><circle cx="11" cy="11" r="9.1" fill="none" stroke="#dfe2e5" stroke-width="2.2"/><path d="M5.2,11 L8.3,11 L10,7.2 L11.8,14.2 L13.2,11 L15.8,11" fill="none" stroke="#4a88c7" stroke-width="1.4" stroke-linejoin="round" stroke-linecap="round"/></svg>
<div class="t" style="top:779.89px;font-size:15.5px;left:991.50px;">Hire trained resource for stakeholder management for future projects</div>
<svg class="a" style="left:1519.5px;top:778.36px" width="17" height="20"><rect x="0.5" y="0.5" width="16" height="19" rx="1.5" fill="#fff" stroke="#eceef0" stroke-width="0.8"/><rect x="0" y="0" width="17" height="3.6" rx="1" fill="#4a90e6"/><path d="M4.6,11.4 L8.6,15 L13.6,6.8" fill="none" stroke="#3a4350" stroke-width="1.5"/></svg>
<div class="t" style="top:779.89px;font-size:15.5px;left:1561.50px;">MelindaW</div>
<svg class="a" style="left:1724.4px;top:780.66px" width="12" height="16"><path d="M1,7.6 L5.6,3.6 L10.2,7.6 M1,11.6 L5.6,7.6 L10.2,11.6" fill="none" stroke="#ef9a2e" stroke-width="2.1"/></svg>
<div class="t" style="top:779.89px;font-size:15.5px;left:1750.00px;">01.02.24</div>
<div class="a" style="left:943.00px;top:801.00px;width:962.50px;height:1.00px;background:#e3e7ee;"></div>
<svg class="a" style="left:951px;top:805.87px" width="22" height="22"><circle cx="11" cy="11" r="9.1" fill="none" stroke="#dfe2e5" stroke-width="2.2"/></svg>
<div class="t" style="top:808.70px;font-size:15.5px;left:991.50px;">Involve PM at any stage</div>
<svg class="a" style="left:1519.5px;top:807.17px" width="17" height="20"><rect x="0.5" y="0.5" width="16" height="19" rx="1.5" fill="#fff" stroke="#eceef0" stroke-width="0.8"/><rect x="0" y="0" width="17" height="3.6" rx="1" fill="#8c5db6"/><circle cx="8.4" cy="11" r="5.9" fill="none" stroke="#3a4350" stroke-width="1.3"/><ellipse cx="8.4" cy="9" rx="1.9" ry="2.3" fill="#3a4350"/><path d="M4.2,15 Q5,11.8 8.4,11.8 Q11.8,11.8 12.6,15 Q8.4,18.4 4.2,15Z" fill="#3a4350"/></svg>
<div class="t" style="top:808.70px;font-size:15.5px;left:1561.50px;">CristinaM</div>
<div class="a" style="left:943.00px;top:830.00px;width:962.50px;height:1.00px;background:#e3e7ee;"></div>
<svg class="a" style="left:951px;top:834.68px" width="22" height="22"><circle cx="11" cy="11" r="9.1" fill="none" stroke="#dfe2e5" stroke-width="2.2"/></svg>
<div class="t" style="top:837.51px;font-size:15.5px;left:991.50px;">Involve IT in requirements definition</div>
<svg class="a" style="left:1519.5px;top:835.98px" width="17" height="20"><rect x="0.5" y="0.5" width="16" height="19" rx="1.5" fill="#fff" stroke="#eceef0" stroke-width="0.8"/><rect x="0" y="0" width="17" height="3.6" rx="1" fill="#8c5db6"/><circle cx="8.4" cy="11" r="5.9" fill="none" stroke="#3a4350" stroke-width="1.3"/><ellipse cx="8.4" cy="9" rx="1.9" ry="2.3" fill="#3a4350"/><path d="M4.2,15 Q5,11.8 8.4,11.8 Q11.8,11.8 12.6,15 Q8.4,18.4 4.2,15Z" fill="#3a4350"/></svg>
<div class="t" style="top:837.51px;font-size:15.5px;left:1561.50px;">GeraldS</div>
<div class="a" style="left:943.00px;top:859.00px;width:962.50px;height:1.00px;background:#e3e7ee;"></div>
<svg class="a" style="left:951px;top:863.49px" width="22" height="22"><circle cx="11" cy="11" r="9.1" fill="none" stroke="#dfe2e5" stroke-width="2.2"/></svg>
<div class="t" style="top:866.32px;font-size:15.5px;left:991.50px;">Involve teams in tests and decisions</div>
<svg class="a" style="left:1519.5px;top:864.79px" width="17" height="20"><rect x="0.5" y="0.5" width="16" height="19" rx="1.5" fill="#fff" stroke="#eceef0" stroke-width="0.8"/><rect x="0" y="0" width="17" height="3.6" rx="1" fill="#f0972f"/><path d="M5.8,5.6 L11,7.4 L5.8,9.6 L11,11.6 L5.8,13.6 L11,15.6" fill="none" stroke="#3a4350" stroke-width="1.2" stroke-linejoin="round"/><circle cx="8.4" cy="17" r="0.8" fill="#3a4350"/><circle cx="8.4" cy="4.4" r="0.7" fill="#3a4350"/></svg>
<div class="t" style="top:866.32px;font-size:15.5px;left:1561.50px;">CristinaM</div>
<div class="a" style="left:943.00px;top:888.00px;width:962.50px;height:1.00px;background:#e3e7ee;"></div>
<div class="t" style="top:928.45px;font-size:21px;left:947.50px;color:#1f3b60;">Offene Meilensteine</div>
<div class="a" style="left:941.00px;top:959.00px;width:967.00px;height:2.00px;background:#4a88c7;"></div>
<div class="t" style="top:979.45px;font-size:15px;left:951.50px;font-weight:bold;">PSP</div>
<div class="t" style="top:979.45px;font-size:15px;left:1017.00px;font-weight:bold;">Meilenstein</div>
<div class="t" style="top:979.45px;font-size:15px;left:1817.00px;font-weight:bold;">Ende</div>
<div class="a" style="left:944.00px;top:1003.00px;width:964.00px;height:3.00px;background:#dde4ef;"></div>
<div class="t" style="top:1011.23px;font-size:15.5px;left:950.00px;">1.4</div>
<div class="t" style="top:1011.23px;font-size:15.5px;left:1014.50px;">Project Closed</div>
<div class="t" style="top:1011.23px;font-size:15.5px;left:1815.30px;">15.04.24</div>
<div class="a" style="left:943.00px;top:1033.00px;width:962.50px;height:1.00px;background:#e3e7ee;"></div>
<div class="t" style="top:1039.93px;font-size:15.5px;left:950.00px;">4.6</div>
<div class="t" style="top:1039.93px;font-size:15.5px;left:1014.50px;">PPM tool ordered</div>
<div class="t" style="top:1039.93px;font-size:15.5px;left:1815.30px;">29.04.24</div>
<div class="a" style="left:943.00px;top:1062.00px;width:962.50px;height:1.00px;background:#e3e7ee;"></div>
<div class="t" style="top:1068.63px;font-size:15.5px;left:950.00px;">5.3</div>
<div class="t" style="top:1068.63px;font-size:15.5px;left:1014.50px;">Software installed</div>
<div class="t" style="top:1068.63px;font-size:15.5px;left:1815.30px;">10.06.24</div>
<div class="a" style="left:943.00px;top:1091.00px;width:962.50px;height:1.00px;background:#e3e7ee;"></div>
<div class="t" style="top:1097.33px;font-size:15.5px;left:950.00px;">6.10</div>
<div class="t" style="top:1097.33px;font-size:15.5px;left:1014.50px;">Implementation completed</div>
<div class="t" style="top:1097.33px;font-size:15.5px;left:1815.30px;">05.03.25</div>
<div class="a" style="left:943.00px;top:1119.00px;width:962.50px;height:1.00px;background:#e3e7ee;"></div>
<div class="t" style="top:1159.75px;font-size:21px;left:947.50px;color:#1f3b60;">Meilenstein-Trendanalyse</div>
<div class="a" style="left:941.00px;top:1191.00px;width:967.00px;height:2.00px;background:#4a88c7;"></div>
</body></html>
